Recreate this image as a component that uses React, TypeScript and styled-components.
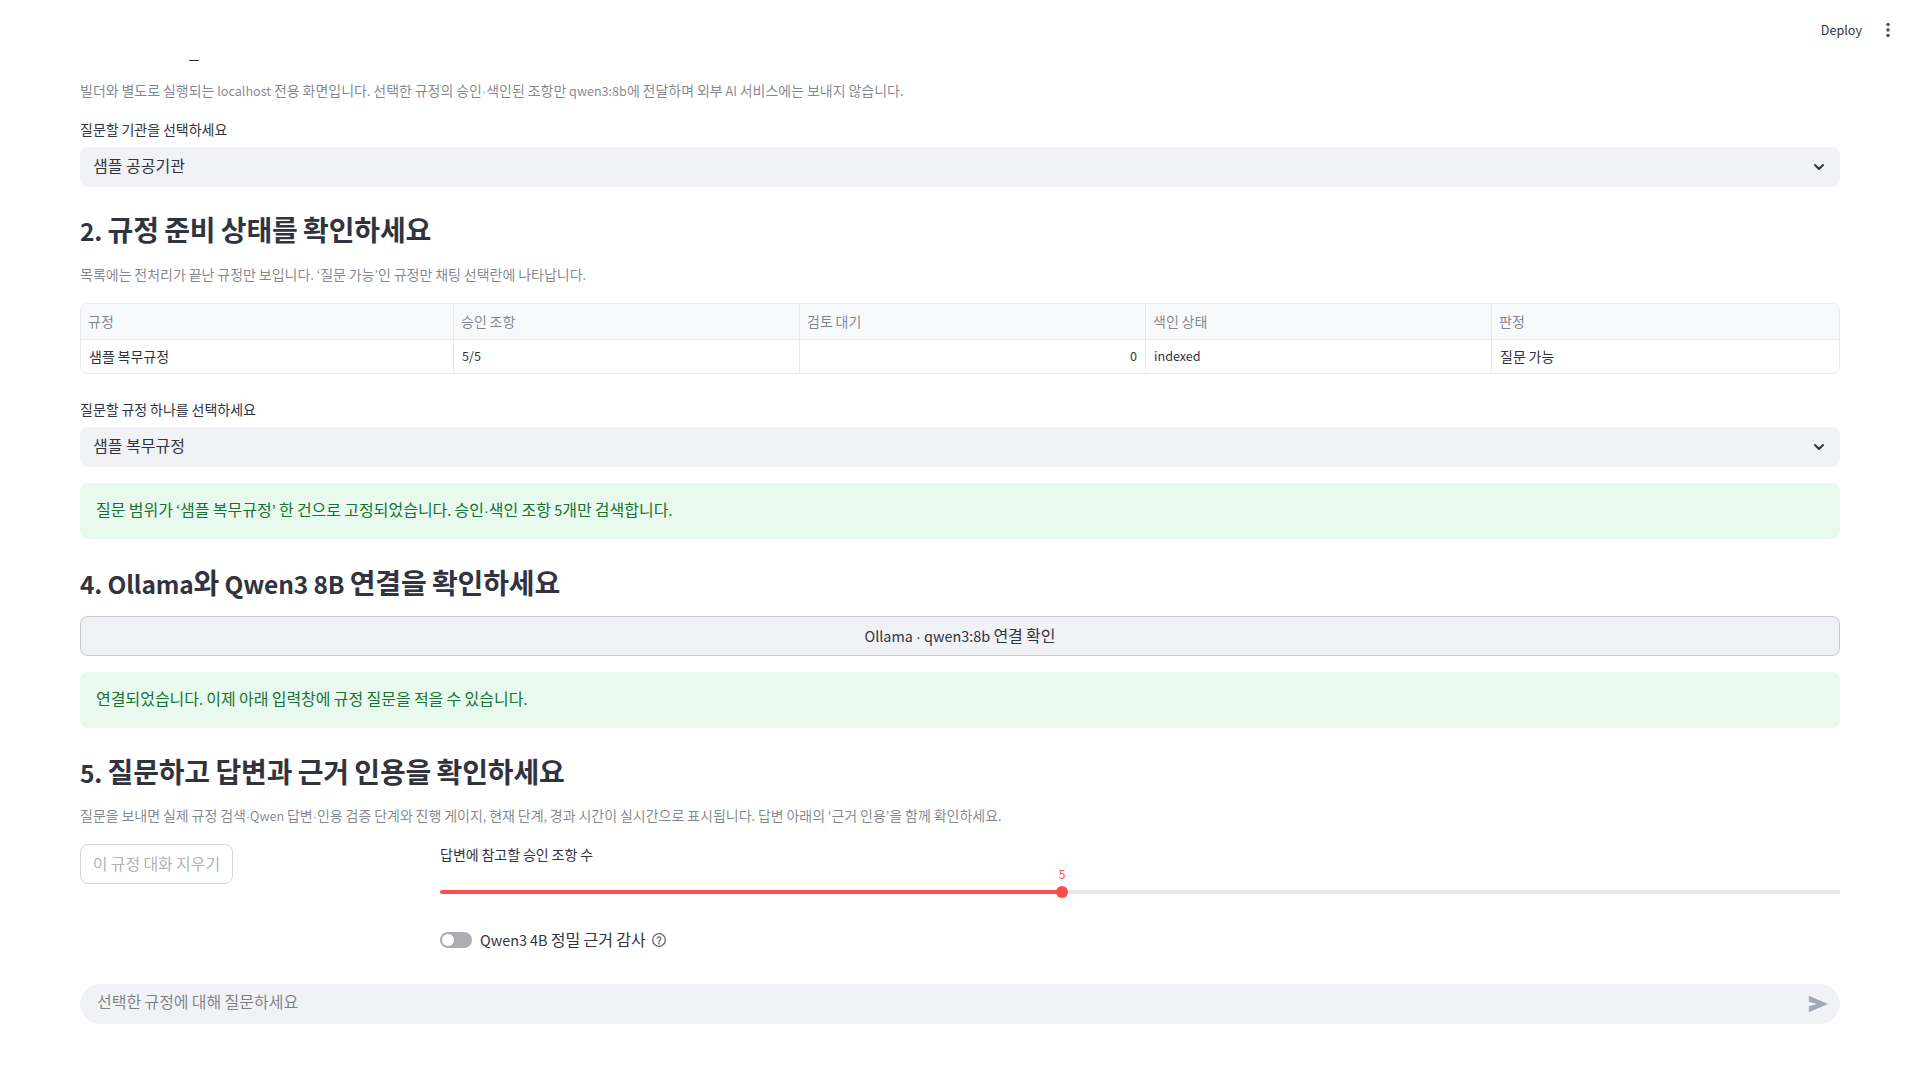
import React from "react";
import styled, { createGlobalStyle } from "styled-components";
import { ChevronDown } from "lucide-react";

const GlobalStyle = createGlobalStyle`
  html, body {
    margin: 0;
    padding: 0;
    height: 100%;
    background: #ffffff;
    overflow: hidden;
  }
  body {
    font-family: "Noto Sans CJK KR", "Noto Sans", sans-serif;
    color: #31333f;
  }
`;

const columns = [
  { title: "규정", value: "샘플 복무규정", width: 373 },
  { title: "승인 조항", value: "5/5", width: 346 },
  { title: "검토 대기", value: "0", width: 346, numeric: true },
  { title: "색인 상태", value: "indexed", width: 346 },
  { title: "판정", value: "질문 가능", width: 348 },
];

const Mixed = ({ text }: { text: string }) => (
  <>
    {text.split(/([\uAC00-\uD7A3]+|·)/).map((part, i) => {
      if (part === "·") return <Dot key={i}>·</Dot>;
      return i % 2 === 1 ? part : part && <Latin key={i}>{part}</Latin>;
    })}
  </>
);

const App = () => {
  return (
    <Page>
      <GlobalStyle />
      <Header>
        <DeployLabel>
          <Mixed text="Deploy" />
        </DeployLabel>
        <MenuDots>
          <svg width="16" height="16" viewBox="0 0 16 16" fill="#49505e">
            <circle cx="8" cy="2.6" r="1.75" />
            <circle cx="8" cy="8" r="1.75" />
            <circle cx="8" cy="13.4" r="1.75" />
          </svg>
        </MenuDots>
      </Header>
      <Main>
        <ClippedHeading />
        <Caption $top={18}>
          <Mixed text="빌더와 별도로 실행되는 localhost 전용 화면입니다. 선택한 규정의 승인·색인된 조항만 qwen3:8b에 전달하며 외부 AI 서비스에는 보내지 않습니다." />
        </Caption>
        <FieldLabel $top={17}>
          <Mixed text="질문할 기관을 선택하세요" />
        </FieldLabel>
        <Select>
          <SelectText>샘플 공공기관</SelectText>
          <ChevronDown size={16} strokeWidth={3} color="#31333f" />
        </Select>

        <Heading $top={21}>
          <Mixed text="2. 규정 준비 상태를 확인하세요" />
        </Heading>
        <Caption $top={11}>
          <Mixed text="목록에는 전처리가 끝난 규정만 보입니다. ‘질문 가능’인 규정만 채팅 선택란에 나타납니다." />
        </Caption>
        <Table>
          <TableRow $head>
            {columns.map((col) => (
              <HeadCell key={col.title} $width={col.width}>
                <Mixed text={col.title} />
              </HeadCell>
            ))}
          </TableRow>
          <TableRow>
            {columns.map((col) => (
              <BodyCell key={col.title} $width={col.width} $numeric={col.numeric}>
                <Mixed text={col.value} />
              </BodyCell>
            ))}
          </TableRow>
        </Table>

        <FieldLabel $top={24}>
          <Mixed text="질문할 규정 하나를 선택하세요" />
        </FieldLabel>
        <Select>
          <SelectText>샘플 복무규정</SelectText>
          <ChevronDown size={16} strokeWidth={3} color="#31333f" />
        </Select>
        <SuccessAlert>
          <Mixed text="질문 범위가 ‘샘플 복무규정’ 한 건으로 고정되었습니다. 승인·색인 조항 5개만 검색합니다." />
        </SuccessAlert>

        <Heading $top={22}>
          <Mixed text="4. Ollama와 Qwen3 8B 연결을 확인하세요" />
        </Heading>
        <WideButton>
          <Mixed text="Ollama · qwen3:8b 연결 확인" />
        </WideButton>
        <SuccessAlert>
          <Mixed text="연결되었습니다. 이제 아래 입력창에 규정 질문을 적을 수 있습니다." />
        </SuccessAlert>

        <Heading $top={22}>
          <Mixed text="5. 질문하고 답변과 근거 인용을 확인하세요" />
        </Heading>
        <Caption $top={10}>
          <Mixed text="질문을 보내면 실제 규정 검색·Qwen 답변·인용 검증 단계와 진행 게이지, 현재 단계, 경과 시간이 실시간으로 표시됩니다. 답변 아래의 ‘근거 인용’을 함께 확인하세요." />
        </Caption>

        <ControlsRow>
          <ClearColumn>
            <ClearButton>
              <Mixed text="이 규정 대화 지우기" />
            </ClearButton>
          </ClearColumn>
          <SettingsColumn>
            <SliderLabel>
              <Mixed text="답변에 참고할 승인 조항 수" />
            </SliderLabel>
            <SliderArea>
              <SliderFill />
              <SliderRest />
              <SliderThumb>
                <SliderValue>5</SliderValue>
              </SliderThumb>
            </SliderArea>
            <ToggleRow>
              <ToggleTrack>
                <ToggleKnob />
              </ToggleTrack>
              <ToggleLabel>
                <Mixed text="Qwen3 4B 정밀 근거 감사" />
              </ToggleLabel>
              <HelpIcon>
                <svg width="16" height="16" viewBox="0 0 24 24" fill="none" stroke="#6b6d76" strokeWidth="2" strokeLinecap="round">
                  <circle cx="12" cy="12" r="9.5" />
                  <path d="M9.2 9.2a2.9 2.9 0 0 1 5.6 1c0 1.9-2.8 2.4-2.8 4" />
                  <circle cx="12" cy="17.4" r="0.5" fill="#6b6d76" />
                </svg>
              </HelpIcon>
            </ToggleRow>
          </SettingsColumn>
        </ControlsRow>

        <ChatInput>
          <ChatPlaceholder>
            <Mixed text="선택한 규정에 대해 질문하세요" />
          </ChatPlaceholder>
          <svg width="22" height="22" viewBox="0 0 24 24" fill="#a3a8b8">
            <path d="M2 3 23 12 2 21v-6.5L11 12 2 9.5z" />
          </svg>
        </ChatInput>
      </Main>
    </Page>
  );
};

const Latin = styled.span`
  font-size: 0.9em;
  line-height: 0;
`;

const Dot = styled.span`
  font-family: "Liberation Sans", sans-serif;
  font-size: 0.9em;
  line-height: 0;
`;

const Page = styled.div`
  width: 1920px;
  height: 1080px;
  overflow: hidden;
  background: #ffffff;
`;

const Header = styled.header`
  height: 60px;
  display: flex;
  align-items: center;
  justify-content: flex-end;
  padding-right: 24px;
  gap: 18px;
  box-sizing: border-box;
`;

const DeployLabel = styled.span`
  font-size: 14px;
  line-height: 20px;
  margin-top: -2px;
  color: #31333f;
`;

const MenuDots = styled.span`
  display: flex;
  width: 16px;
  height: 16px;
`;

const Main = styled.main`
  padding: 0 80px;
  display: flex;
  flex-direction: column;
`;

const ClippedHeading = styled.div`
  width: 10px;
  height: 1px;
  margin-left: 109px;
  background: #31333f;
`;

const Caption = styled.p<{ $top: number }>`
  margin: ${(props) => props.$top}px 0 0;
  font-size: 14px;
  line-height: 22px;
  color: rgba(49, 51, 63, 0.6);
  white-space: nowrap;
`;

const FieldLabel = styled.label<{ $top: number }>`
  margin-top: ${(props) => props.$top}px;
  font-size: 14px;
  line-height: 22px;
  height: 29px;
  color: #31333f;
`;

const Select = styled.div`
  height: 40px;
  box-sizing: border-box;
  padding: 0 13px;
  display: flex;
  align-items: center;
  justify-content: space-between;
  background: #f0f2f6;
  border-radius: 8px;
  font-size: 16px;
  color: #31333f;
`;

const SelectText = styled.span`
  margin-bottom: 4px;
`;

const Heading = styled.h3<{ $top: number }>`
  margin: ${(props) => props.$top}px 0 2px;
  font-size: 28px;
  line-height: 42px;
  font-weight: 600;
  letter-spacing: -0.15px;
  color: #31333f;
  ${Latin} {
    font-size: 0.875em;
  }
`;

const Table = styled.div`
  margin-top: 18px;
  height: 71px;
  box-sizing: border-box;
  border: 1px solid #e6e9ef;
  border-radius: 8px;
  overflow: hidden;
`;

const TableRow = styled.div<{ $head?: boolean }>`
  display: flex;
  height: ${(props) => (props.$head ? 36 : 34)}px;
  box-sizing: border-box;
  background: ${(props) => (props.$head ? "#f8f9fb" : "#ffffff")};
  border-bottom: ${(props) => (props.$head ? "1px solid #e6e9ef" : "none")};
`;

const HeadCell = styled.div<{ $width: number }>`
  width: ${(props) => props.$width}px;
  flex-shrink: 0;
  box-sizing: border-box;
  padding: 0 7px 2px;
  display: flex;
  align-items: center;
  font-size: 14px;
  white-space: pre;
  color: rgba(49, 51, 63, 0.6);
  border-right: 1px solid #e6e9ef;
  &:last-child {
    border-right: none;
    flex: 1;
  }
`;

const BodyCell = styled.div<{ $width: number; $numeric?: boolean }>`
  width: ${(props) => props.$width}px;
  flex-shrink: 0;
  box-sizing: border-box;
  padding: 0 8px 2px;
  display: flex;
  align-items: center;
  justify-content: ${(props) => (props.$numeric ? "flex-end" : "flex-start")};
  font-size: 14px;
  white-space: pre;
  color: #31333f;
  border-right: 1px solid #e6e9ef;
  &:last-child {
    border-right: none;
    flex: 1;
  }
`;

const SuccessAlert = styled.div`
  margin-top: 16px;
  height: 56px;
  box-sizing: border-box;
  padding: 0 16px;
  line-height: 52px;
  background: #e8f9ee;
  border-radius: 8px;
  font-size: 16px;
  color: #177233;
`;

const WideButton = styled.button`
  margin-top: 11px;
  height: 40px;
  padding: 0 0 2px;
  font: inherit;
  font-size: 16px;
  color: #31333f;
  background: #f0f2f6;
  border: 1px solid #c6c8ce;
  border-radius: 8px;
`;

const ControlsRow = styled.div`
  margin-top: 18px;
  display: flex;
  height: 124px;
`;

const ClearColumn = styled.div`
  width: 360px;
  flex-shrink: 0;
`;

const ClearButton = styled.button`
  width: 153px;
  height: 40px;
  padding: 0 0 2px;
  font: inherit;
  font-size: 16px;
  color: rgba(49, 51, 63, 0.4);
  background: #ffffff;
  border: 1px solid #d6d6d9;
  border-radius: 8px;
`;

const SettingsColumn = styled.div`
  flex: 1;
  display: flex;
  flex-direction: column;
`;

const SliderLabel = styled.label`
  font-size: 14px;
  line-height: 20px;
  margin-bottom: 2px;
  color: #31333f;
`;

const SliderArea = styled.div`
  position: relative;
  margin-top: 24px;
  height: 4px;
  display: flex;
`;

const SliderFill = styled.div`
  width: 622px;
  background: #ff4b4b;
  border-radius: 2px 0 0 2px;
`;

const SliderRest = styled.div`
  flex: 1;
  background: #e3e7ee;
  border-radius: 0 2px 2px 0;
`;

const SliderThumb = styled.div`
  position: absolute;
  left: 616px;
  top: -4px;
  width: 12px;
  height: 12px;
  border-radius: 50%;
  background: #ff4b4b;
`;

const SliderValue = styled.span`
  position: absolute;
  left: 50%;
  top: -21px;
  transform: translateX(-50%);
  font-size: 12px;
  line-height: 18px;
  color: #ff4b4b;
`;

const ToggleRow = styled.div`
  margin-top: 35px;
  display: flex;
  align-items: center;
  height: 22px;
`;

const ToggleTrack = styled.div`
  width: 32px;
  height: 16px;
  box-sizing: border-box;
  padding: 2px;
  background: #acaeb4;
  border-radius: 8px;
`;

const ToggleKnob = styled.div`
  width: 12px;
  height: 12px;
  border-radius: 50%;
  background: #ffffff;
`;

const ToggleLabel = styled.span`
  margin: -2px 0 0 8px;
  font-size: 16px;
  color: #31333f;
`;

const HelpIcon = styled.span`
  display: flex;
  margin-left: 5px;
`;

const ChatInput = styled.div`
  margin-top: 16px;
  height: 40px;
  box-sizing: border-box;
  padding: 0 11px 0 17px;
  display: flex;
  align-items: center;
  justify-content: space-between;
  background: #f0f2f6;
  border-radius: 20px;
`;

const ChatPlaceholder = styled.span`
  font-size: 16px;
  line-height: 24px;
  margin-top: -6px;
  color: rgba(49, 51, 63, 0.6);
`;

export default App;
